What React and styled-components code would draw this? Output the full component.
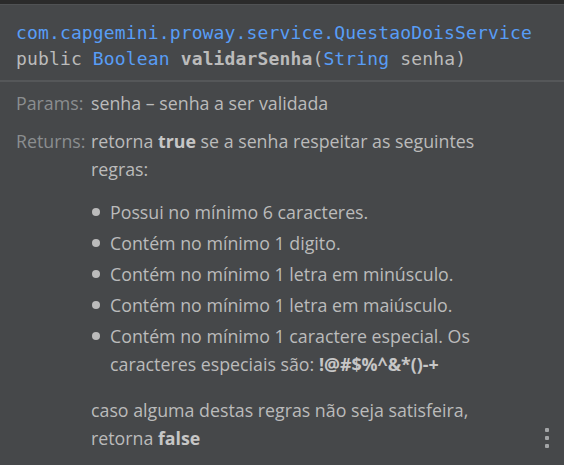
import React from "react";
import styled, { createGlobalStyle } from "styled-components";

const GlobalStyle = createGlobalStyle`
  html, body {
    margin: 0;
    padding: 0;
    background: #46484a;
  }
  body {
    font-family: "Open Sans", "Noto Sans", sans-serif;
  }
`;

const Popup = styled.div`
  width: 564px;
  height: 465px;
  overflow: hidden;
  position: relative;
  background: #46484a;
  border-top: 4px solid #2b2b2b;
  box-sizing: border-box;
`;

const Header = styled.div`
  padding: 15px 16px 8px;
  border-top: 1px solid #505254;
  border-bottom: 2px solid #555759;
  font-family: "DejaVu Sans Mono", "Liberation Mono", monospace;
  font-size: 18px;
  letter-spacing: 0.14px;
  line-height: 26px;
  color: #bbbbbb;
  white-space: nowrap;
`;

const CodeLine = styled.div``;

const Token = styled.span`
  color: ${(p) => (p.$kind === "type" ? "#589df6" : "#bbbbbb")};
  font-weight: ${(p) => (p.$kind === "name" ? 700 : 400)};
`;

const Body = styled.div`
  padding: 7px 30px 0 16px;
  font-size: 17.8px;
  line-height: 28px;
  color: #bbbbbb;
`;

const Section = styled.div`
  display: grid;
  grid-template-columns: 75px 1fr;
  margin-bottom: 10px;
  white-space: nowrap;
`;

const Label = styled.div`
  color: #8b8e90;
`;

const Content = styled.div``;

const Strong = styled.b`
  font-weight: 700;
  color: #c6c6c6;
`;

const List = styled.ul`
  list-style: none;
  margin: 15px 0 18px;
  padding: 0;
`;

const Item = styled.li`
  position: relative;
  padding-left: 19px;
  margin-bottom: 3px;

  &::before {
    content: "";
    position: absolute;
    left: 1px;
    top: 10px;
    width: 8px;
    height: 8px;
    border-radius: 50%;
    background: #bbbbbb;
  }
`;

const Kebab = styled.div`
  position: absolute;
  right: 15px;
  bottom: 17px;
  display: flex;
  flex-direction: column;
  gap: 4px;

  span {
    width: 4px;
    height: 4px;
    border-radius: 1px;
    background: #a3a5a7;
  }
`;

const rules = [
  "Possui no mínimo 6 caracteres.",
  "Contém no mínimo 1 digito.",
  "Contém no mínimo 1 letra em minúsculo.",
  "Contém no mínimo 1 letra em maiúsculo.",
];

export default function App() {
  return (
    <>
      <GlobalStyle />
      <Popup>
        <Header>
          <CodeLine>
            <Token $kind="type">com.capgemini.proway.service.QuestaoDoisService</Token>
          </CodeLine>
          <CodeLine>
            <Token>public </Token>
            <Token $kind="type">Boolean</Token>
            <Token> </Token>
            <Token $kind="name">validarSenha</Token>
            <Token>(</Token>
            <Token $kind="type">String</Token>
            <Token> senha)</Token>
          </CodeLine>
        </Header>
        <Body>
          <Section>
            <Label>Params:</Label>
            <Content>senha – senha a ser validada</Content>
          </Section>
          <Section>
            <Label>Returns:</Label>
            <Content>
              retorna <Strong>true</Strong> se a senha respeitar as seguintes
              <br />
              regras:
              <List>
                {rules.map((r) => (
                  <Item key={r}>{r}</Item>
                ))}
                <Item>
                  Contém no mínimo 1 caractere especial. Os
                  <br />
                  caracteres especiais são: <Strong>!@#$%^&amp;*()-+</Strong>
                </Item>
              </List>
              caso alguma destas regras não seja satisfeira,
              <br />
              retorna <Strong>false</Strong>
            </Content>
          </Section>
        </Body>
        <Kebab>
          <span />
          <span />
          <span />
        </Kebab>
      </Popup>
    </>
  );
}
